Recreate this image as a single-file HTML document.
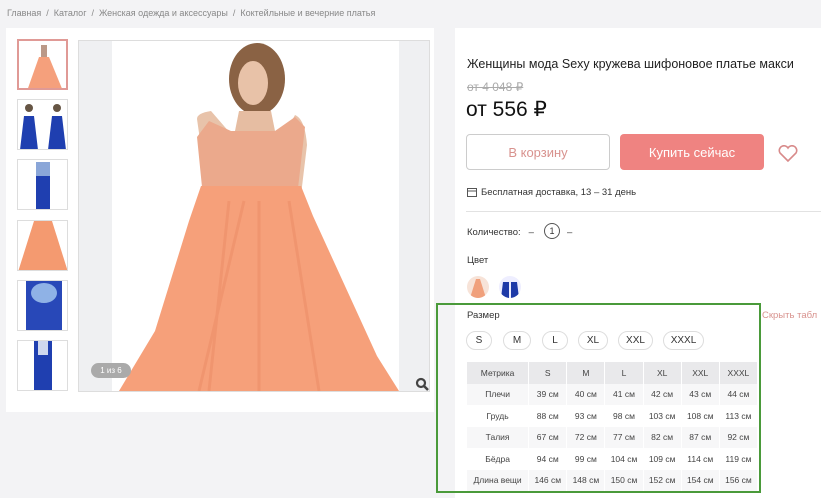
<!DOCTYPE html>
<html><head><meta charset="utf-8"><style>
*{margin:0;padding:0;box-sizing:border-box}
body{width:821px;height:498px;overflow:hidden;background:#f3f3f5;font-family:"Liberation Sans",sans-serif;color:#333;position:relative}
.a{position:absolute}
.bc{left:7px;top:8px;font-size:9px;color:#888}
.lp{left:6px;top:28px;width:428px;height:384px;background:#fff}
.th{position:absolute;left:17px;width:51px;height:51px;border:1px solid #ddd;background:#fff;overflow:hidden}
.rp{left:455px;top:28px;width:366px;height:470px;background:#fff}
.btn{position:absolute;height:36px;border-radius:4px;font-size:13px;display:flex;align-items:center;justify-content:center}
.sz{position:absolute;top:331px;height:19px;border:1px solid #ddd;border-radius:10px;font-size:10px;display:flex;align-items:center;justify-content:center;color:#333}
table{border-collapse:separate;border-spacing:1px 0;font-size:8.5px;color:#444;table-layout:fixed}
td{height:21.5px;text-align:center;width:37px;white-space:nowrap;overflow:hidden}
tr:first-child td{background:#e9e9eb}
tr:nth-child(even) td{background:#f7f7f8}
</style></head><body>
<div class="a bc">Главная &nbsp;/ &nbsp;Каталог &nbsp;/ &nbsp;Женская одежда и аксессуары &nbsp;/ &nbsp;Коктейльные и вечерние платья</div>
<div class="a lp"></div>
<div class="th" style="top:39px;border:2px solid #e09a96"><svg width="51" height="51"><path d="M22 4h6v12h-6z" fill="#b98"/><path d="M20 16h10l14 34H8z" fill="#f5a07c"/></svg></div>
<div class="th" style="top:99px"><svg width="51" height="51"><path d="M6 16h10l4 34H2z M34 16h10l4 34H30z" fill="#1f3fb0"/><circle cx="11" cy="8" r="4" fill="#654"/><circle cx="39" cy="8" r="4" fill="#654"/></svg></div>
<div class="th" style="top:159px"><svg width="51" height="51"><path d="M18 2h14v48H18z" fill="#1f3fb0"/><path d="M18 2h14v14H18z" fill="#8aa6d8"/></svg></div>
<div class="th" style="top:220px"><svg width="51" height="51"><path d="M16 0h18l16 51H0z" fill="#f49a70"/></svg></div>
<div class="th" style="top:280px"><svg width="51" height="51"><path d="M8 0h36v51H8z" fill="#2848b8"/><ellipse cx="26" cy="12" rx="13" ry="10" fill="#8fb2e6"/></svg></div>
<div class="th" style="top:340px"><svg width="51" height="51"><path d="M16 0h18v51H16z" fill="#1f3fb0"/><path d="M20 0h10v14H20z" fill="#cfd8ee"/></svg></div>
<div class="a" style="left:78px;top:40px;width:352px;height:352px;background:#eff0f2;border:1px solid #ddd">
<div class="a" style="left:33px;top:0;width:287px;height:350px;background:#fff"></div>
<svg class="a" style="left:0;top:0" width="350" height="350">
<ellipse cx="178" cy="38" rx="28" ry="36" fill="#8a6244"/>
<ellipse cx="174" cy="42" rx="15" ry="22" fill="#e8c2a8"/>
<path d="M160 70h32l6 30h-44z" fill="#e6bda2"/>
<path d="M118 78q0-6 14-8l26 30h40q14-18 18-26 10 4 12 30l-6 50 24 50-10 2-20-40-10-20H128l-6-40z" fill="#e8c3aa"/>
<path d="M130 80l22 10 44 0 20-14 10 10-8 70H124l-6-60z" fill="#eba98c"/>
<path d="M122 145h100l12 30 64 140 22 35H40l36-60 34-110z" fill="#f6a07a"/>
<path d="M150 160l-20 190M180 160l0 190M210 160l30 190M165 160l-45 190" stroke="#ec8c66" stroke-width="3" opacity=".5"/>
</svg>
<div class="a" style="left:12px;top:322px;width:40px;height:15px;border-radius:8px;background:#aaa;color:#fff;font-size:8px;text-align:center;line-height:15px">1 из 6</div>
<svg class="a" style="left:336px;top:336px" width="14" height="14"><circle cx="6" cy="6" r="4" stroke="#444" stroke-width="2.2" fill="none"/><path d="M9 9l4 4" stroke="#444" stroke-width="2.5"/></svg>
</div>
<div class="a rp"></div>
<div class="a" style="left:467px;top:57px;font-size:12.5px;color:#222">Женщины мода Sexy кружева шифоновое платье макси</div>
<div class="a" style="left:467px;top:80px;font-size:12px;color:#aaa;text-decoration:line-through">от 4 048 ₽</div>
<div class="a" style="left:466px;top:97px;font-size:21px;color:#111">от 556 ₽</div>
<div class="btn" style="left:466px;top:134px;width:144px;border:1px solid #ccc;color:#d8928e">В корзину</div>
<div class="btn" style="left:620px;top:134px;width:144px;background:#ef8381;color:#fff">Купить сейчас</div>
<svg class="a" style="left:778px;top:145px" width="20" height="18"><path d="M10 16L2 8a4.5 4.5 0 0 1 8-5 4.5 4.5 0 0 1 8 5z" fill="none" stroke="#d88a8a" stroke-width="1.6"/></svg>
<svg class="a" style="left:467px;top:187px" width="10" height="10"><rect x=".5" y="1.5" width="9" height="8" fill="none" stroke="#555"/><path d="M1 4h8" stroke="#555"/></svg>
<div class="a" style="left:481px;top:187px;font-size:9.5px;color:#333">Бесплатная доставка, 13 – 31 день</div>
<div class="a" style="left:466px;top:211px;width:355px;height:1px;background:#e2e2e2"></div>
<div class="a" style="left:467px;top:227px;font-size:9.5px">Количество: &nbsp; –</div>
<div class="a" style="left:544px;top:223px;width:16px;height:16px;border:1px solid #555;border-radius:50%;font-size:9px;text-align:center;line-height:14px">1</div>
<div class="a" style="left:567px;top:227px;font-size:9.5px">–</div>
<div class="a" style="left:467px;top:255px;font-size:9.5px">Цвет</div>
<div class="a" style="left:467px;top:276px;width:22px;height:22px;border-radius:50%;background:#f7e3d8;overflow:hidden"><svg width="22" height="22"><path d="M9 3h4l6 19H3z" fill="#f0a07c"/></svg></div>
<div class="a" style="left:499px;top:276px;width:22px;height:22px;border-radius:50%;background:#eef;overflow:hidden"><svg width="22" height="22"><path d="M4 6h6v16H2zM12 6h6l2 16h-8z" fill="#1e3aa8"/></svg></div>
<div class="a" style="left:467px;top:310px;font-size:9.5px">Размер</div>
<div class="a" style="left:762px;top:310px;font-size:9.5px;color:#d8928e;white-space:nowrap">Скрыть табл</div>
<div class="sz" style="left:466px;width:26px">S</div>
<div class="sz" style="left:503px;width:28px">M</div>
<div class="sz" style="left:542px;width:26px">L</div>
<div class="sz" style="left:578px;width:30px">XL</div>
<div class="sz" style="left:618px;width:35px">XXL</div>
<div class="sz" style="left:663px;width:41px">XXXL</div>
<table class="a" style="left:466px;top:362px;width:292px">
<colgroup><col style="width:61px"><col><col><col><col><col><col></colgroup>
<tr><td>Метрика</td><td>S</td><td>M</td><td>L</td><td>XL</td><td>XXL</td><td>XXXL</td></tr>
<tr><td>Плечи</td><td>39 см</td><td>40 см</td><td>41 см</td><td>42 см</td><td>43 см</td><td>44 см</td></tr>
<tr><td>Грудь</td><td>88 см</td><td>93 см</td><td>98 см</td><td>103 см</td><td>108 см</td><td>113 см</td></tr>
<tr><td>Талия</td><td>67 см</td><td>72 см</td><td>77 см</td><td>82 см</td><td>87 см</td><td>92 см</td></tr>
<tr><td>Бёдра</td><td>94 см</td><td>99 см</td><td>104 см</td><td>109 см</td><td>114 см</td><td>119 см</td></tr>
<tr><td>Длина вещи</td><td>146 см</td><td>148 см</td><td>150 см</td><td>152 см</td><td>154 см</td><td>156 см</td></tr>
</table>
<div class="a" style="left:436px;top:303px;width:325px;height:190px;border:2px solid #4a9a3a"></div>
</body></html>
